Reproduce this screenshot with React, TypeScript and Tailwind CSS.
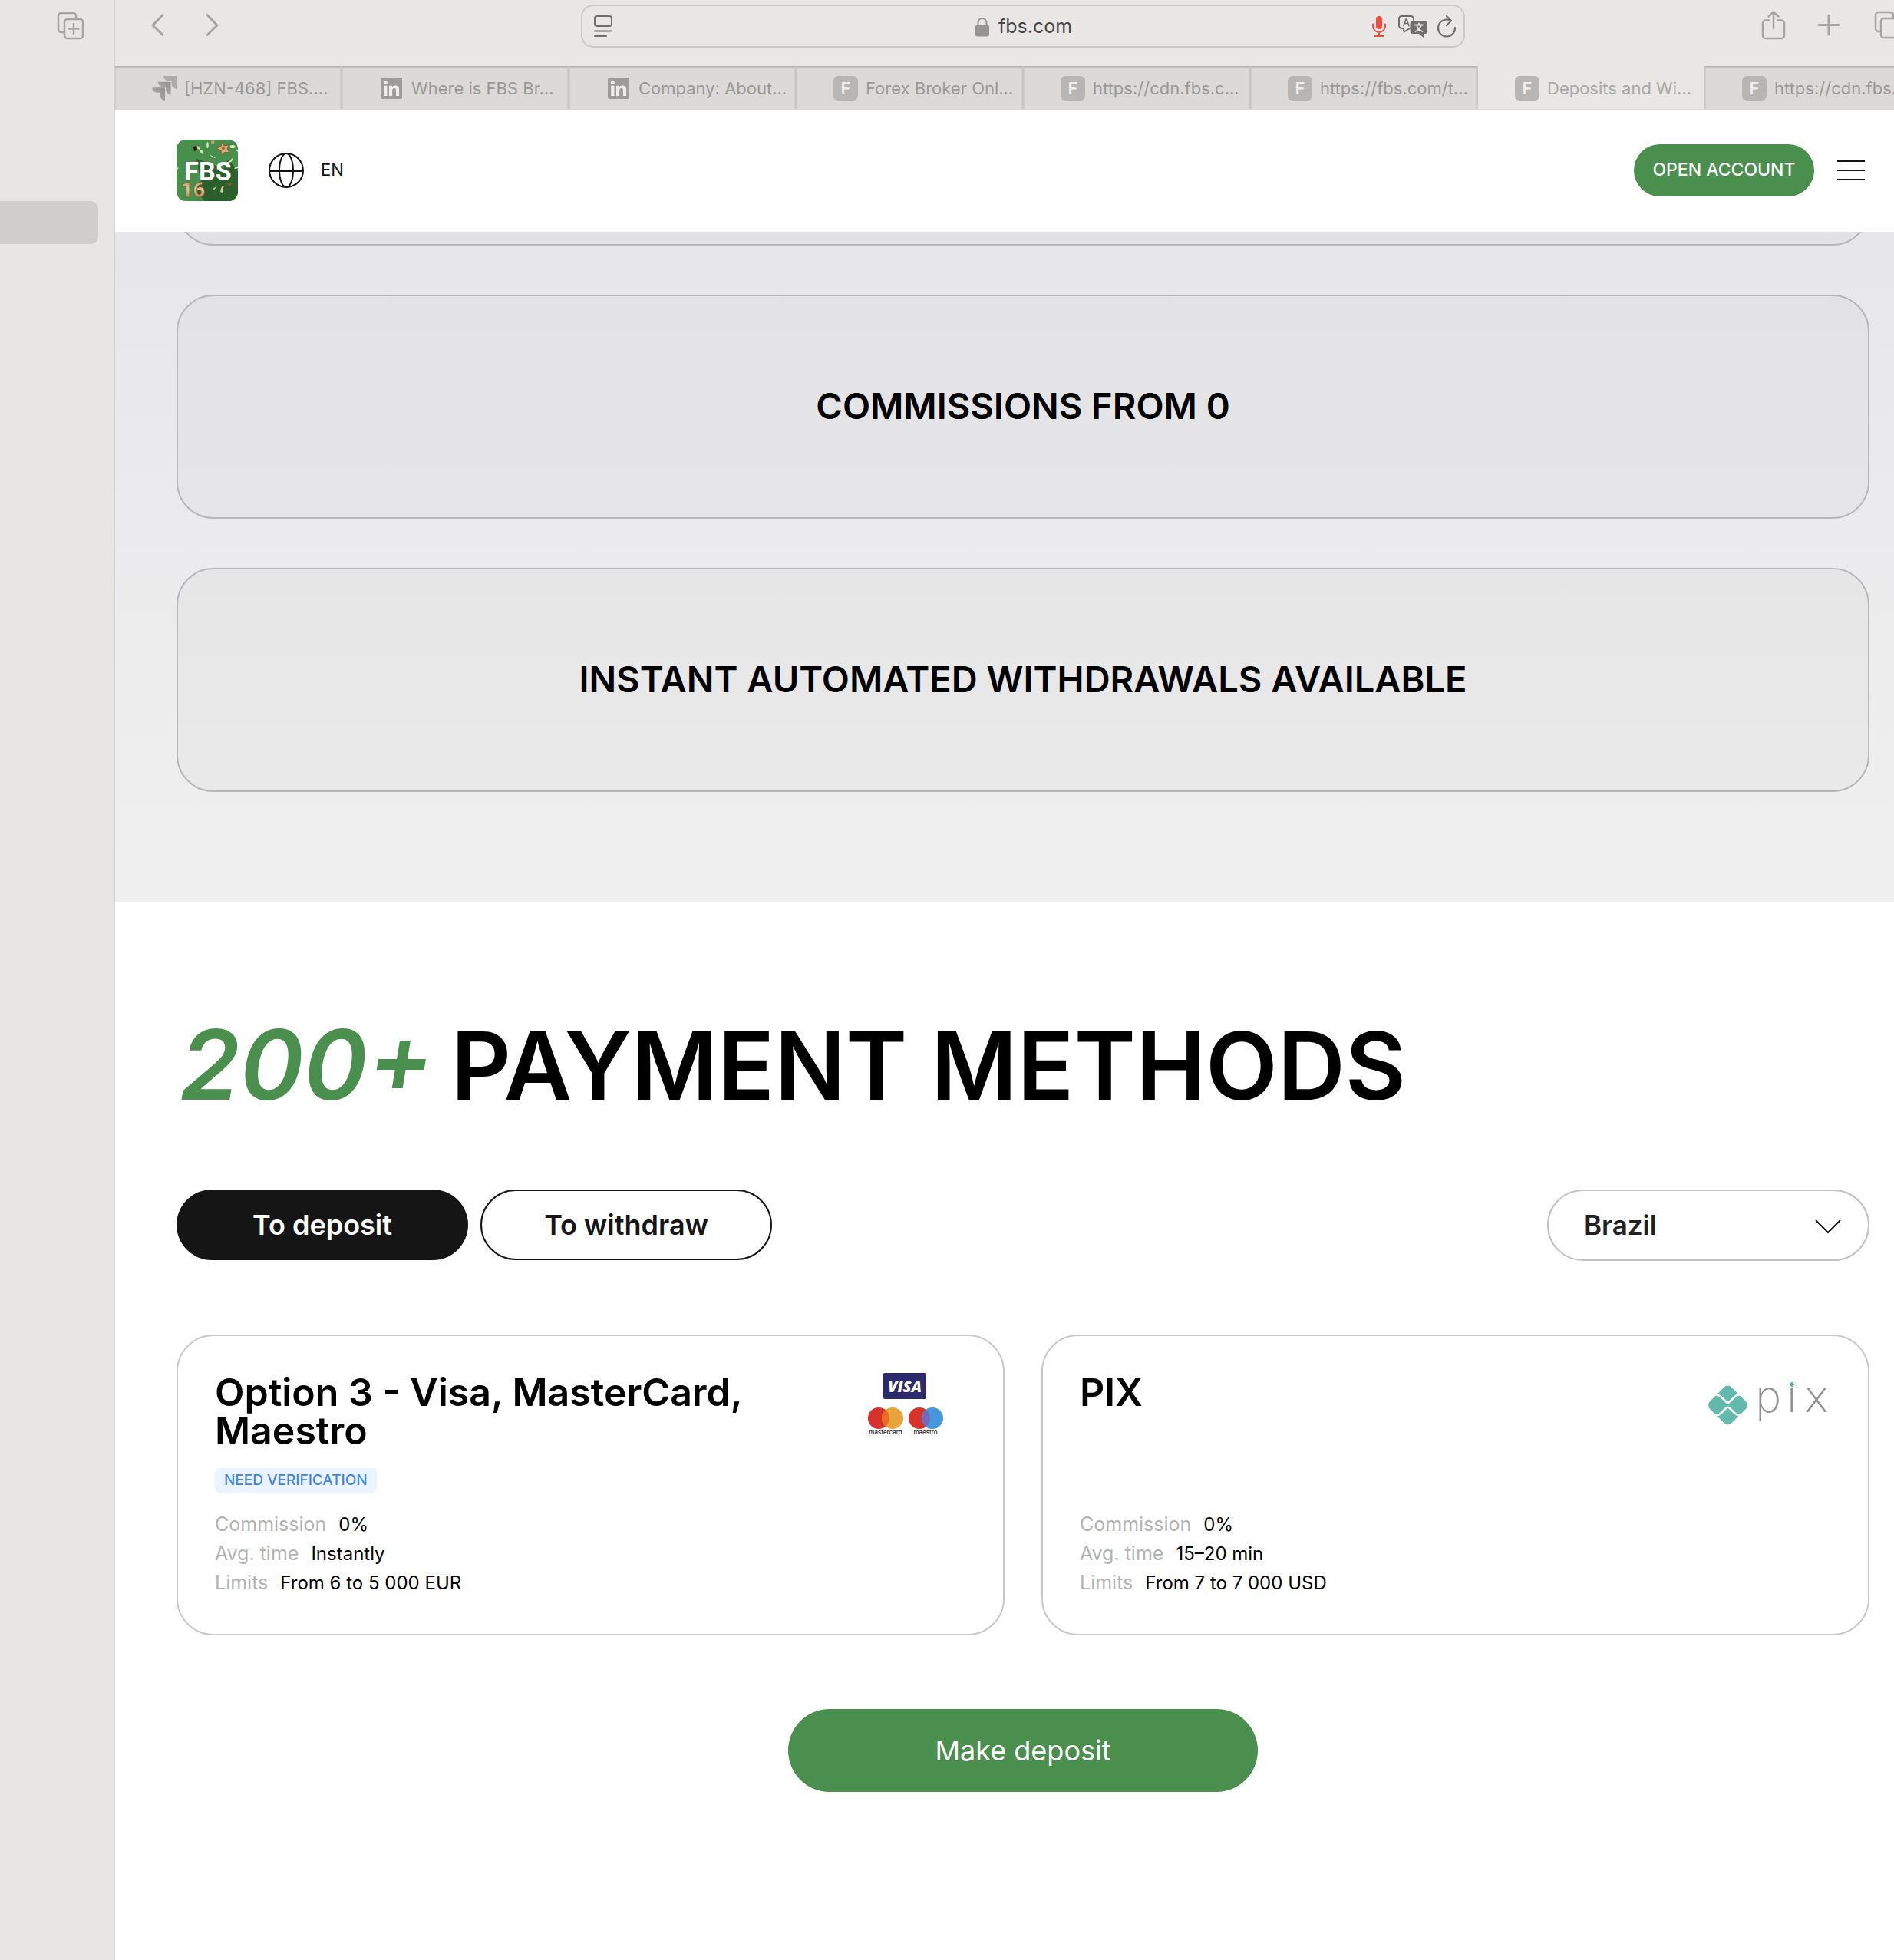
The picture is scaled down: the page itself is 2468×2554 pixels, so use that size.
import React from "react";

const tabs: { icon: "jira" | "linkedin" | "f"; label: string; active?: boolean }[] = [
  { icon: "jira", label: "[HZN-468] FBS...." },
  { icon: "linkedin", label: "Where is FBS Br..." },
  { icon: "linkedin", label: "Company: About..." },
  { icon: "f", label: "Forex Broker Onl..." },
  { icon: "f", label: "https://cdn.fbs.c..." },
  { icon: "f", label: "https://fbs.com/t..." },
  { icon: "f", label: "Deposits and Wi...", active: true },
  { icon: "f", label: "https://cdn.fbs.c..." },
];

function TabIcon({ kind }: { kind: "jira" | "linkedin" | "f" }) {
  if (kind === "jira") {
    return (
      <svg viewBox="0 0 32 32" className="size-8 shrink-0" aria-hidden="true">
        <defs>
          <linearGradient id="jiraFade" x1="1" y1="0" x2="0" y2="1">
            <stop offset="0.2" stopColor="#979695" />
            <stop offset="0.8" stopColor="#b0afae" />
          </linearGradient>
        </defs>
        <path fill="#adacab" d="M15 0h17v17a7 7 0 0 1-6.500-7V6.500H22A7 7 0 0 1 15 0Z" />
        <path fill="url(#jiraFade)" d="M7.500 7.700h17v17a7 7 0 0 1-6.500-7v-3.500h-3.500a7 7 0 0 1-7-6.500Z" />
        <path fill="url(#jiraFade)" d="M0 15.300h17v17a7 7 0 0 1-6.500-7v-3.500H7a7 7 0 0 1-7-6.500Z" />
      </svg>
    );
  }
  if (kind === "linkedin") {
    return (
      <svg viewBox="0 0 32 32" className="size-8 shrink-0" aria-hidden="true">
        <rect x="2" y="2" width="28" height="28" rx="2" fill="#9d9c9b" />
        <circle cx="8.300" cy="8.500" r="2.500" fill="#eeedec" />
        <path fill="#eeedec" d="M6.200 12.800h4.200V26H6.200zM13 12.800h4v1.900c.7-1.300 2.200-2.200 4.200-2.200 4 0 4.900 2.500 4.900 6V26H22v-6.700c0-1.700-.2-3.400-2.300-3.400s-2.600 1.700-2.600 3.400V26H13z" />
      </svg>
    );
  }
  return (
    <span className="flex size-8 shrink-0 items-center justify-center rounded-md bg-[#b7b6b5] text-[22px] font-semibold text-[#eeeeed]">
      F
    </span>
  );
}

const stroke = { fill: "none", strokeLinecap: "round", strokeLinejoin: "round" } as const;

function Toolbar() {
  return (
    <div className="flex h-[86px] items-start pl-[42px] text-[#a6a5a4]">
      <button aria-label="Back" className="mt-4 flex h-8 w-7 justify-center">
        <svg viewBox="0 0 28 32" className="h-8 w-7" stroke="currentColor" strokeWidth="3" {...stroke}>
          <path d="M20 3.500 7 17l13 12.500" />
        </svg>
      </button>
      <button aria-label="Forward" className="mt-4 ml-11 flex h-8 w-7 justify-center">
        <svg viewBox="0 0 28 32" className="h-8 w-7" stroke="currentColor" strokeWidth="3" {...stroke}>
          <path d="m6 3.500 13 13.500L6 29.500" />
        </svg>
      </button>
      <div className="flex flex-1 justify-center">
        <div className="mt-1.5 ml-20 flex h-14 w-[1152px] items-center rounded-2xl border-2 border-[#cbcac8] pr-2 pl-3 text-[#6f6e6d]">
          <button aria-label="Show reader" className="size-8">
            <svg viewBox="0 0 32 32" className="size-8" stroke="currentColor" strokeWidth="2" {...stroke}>
              <rect x="4" y="3" width="22" height="13" rx="3" />
              <path d="M4 22.500h22M4 29h15" />
            </svg>
          </button>
          <label className="flex flex-1 items-center justify-center gap-3 pt-0.5 pl-21">
            <svg viewBox="0 0 18 26" className="h-[26px] w-[18px]" aria-hidden="true">
              <path d="M3.500 12V7.500a5.500 5.500 0 0 1 11 0V12" fill="none" stroke="#969594" strokeWidth="2" />
              <rect x="0" y="10.500" width="18" height="15" rx="2.500" fill="#969594" />
            </svg>
            <input
              aria-label="Address"
              defaultValue="fbs.com"
              className="w-[100px] bg-transparent text-[25px] text-[#484746] outline-none"
            />
          </label>
          <div className="flex items-center gap-2.5">
            <button aria-label="Mute tab" className="mr-0.5 h-8 w-6">
              <svg viewBox="0 0 24 32" className="h-8 w-6" {...stroke} stroke="#ee4d3d" strokeWidth="2">
                <rect x="8" y="3" width="8" height="17" rx="4" fill="#ee4d3d" stroke="none" />
                <path d="M4 13.500v2.500a8 8 0 0 0 16 0v-2.500M12 24v5M6.500 29h11" />
              </svg>
            </button>
            <button aria-label="Translate" className="h-8 w-10">
              <svg viewBox="0 0 40 32" className="h-8 w-10" {...stroke} stroke="currentColor" strokeWidth="2">
                <path d="M17 18.500 8.500 23.500 8 19H5.500A3.500 3.500 0 0 1 2 15.500v-9A3.500 3.500 0 0 1 5.500 3h12A3.500 3.500 0 0 1 21 6.500V8" />
                <path d="m8 15.500 3.500-9.500 3.500 9.500M9.200 12.500h4.600" strokeWidth="1.700" />
                <path d="M20 9.500h15.500A3.500 3.500 0 0 1 39 13v9.500a3.500 3.500 0 0 1-3.500 3.500H34v5l-6-5h-8a3.500 3.500 0 0 1-3.500-3.500V13A3.500 3.500 0 0 1 20 9.500Z" fill="currentColor" stroke="none" />
                <path d="M23 14.500h10M28 12.500v2M31 14.500c-1 4-4 7-7.500 8.500M25 14.500c1 4 4 7 7.500 8.500" stroke="#e8e7e5" strokeWidth="1.800" />
              </svg>
            </button>
            <button aria-label="Reload" className="h-8 w-7">
              <svg viewBox="0 0 28 32" className="h-8 w-7" {...stroke} stroke="currentColor" strokeWidth="2.200">
                <path d="M25 18a11 11 0 1 1-11-10.500c2 0 3.500.3 5 1M14 3l6 6-6 6" />
              </svg>
            </button>
          </div>
        </div>
      </div>
      <div className="flex items-start gap-9 overflow-hidden">
        <button aria-label="Share" className="mt-3 h-10 w-9">
          <svg viewBox="0 0 36 40" className="h-10 w-9" {...stroke} stroke="currentColor" strokeWidth="2.500">
            <path d="M11 14.500H6.500A3.500 3.500 0 0 0 3 18v16.500A3.500 3.500 0 0 0 6.500 38h21a3.500 3.500 0 0 0 3.500-3.500V18a3.500 3.500 0 0 0-3.500-3.500H22M17 25V4M10.500 9.500 17 3.500l6.500 6" />
          </svg>
        </button>
        <button aria-label="New tab" className="mt-4 h-8 w-9">
          <svg viewBox="0 0 36 32" className="h-8 w-9" {...stroke} stroke="currentColor" strokeWidth="3">
            <path d="M17 4v25M4 16.500h26" />
          </svg>
        </button>
        <button aria-label="Tab overview" className="mt-3 -mr-2.5 h-10 w-10">
          <svg viewBox="0 0 40 40" className="size-10" {...stroke} stroke="currentColor" strokeWidth="2.500">
            <path d="M11 29H9.500A3.500 3.500 0 0 1 6 25.500v-18A3.500 3.500 0 0 1 9.500 4h16A3.500 3.500 0 0 1 29 7.500V12" />
            <rect x="13" y="12" width="24" height="25" rx="3.500" />
          </svg>
        </button>
      </div>
    </div>
  );
}

function FbsLogo() {
  return (
    <svg viewBox="0 0 80 80" className="size-20" role="img" aria-label="FBS">
      <defs>
        <clipPath id="logoClip">
          <rect width="80" height="80" rx="12" />
        </clipPath>
        <linearGradient id="gold" x1="0" y1="0" x2="0" y2="1">
          <stop offset="0" stopColor="#b5834f" />
          <stop offset="0.45" stopColor="#e6c59c" />
          <stop offset="1" stopColor="#a06d38" />
        </linearGradient>
      </defs>
      <g clipPath="url(#logoClip)">
        <rect width="80" height="80" fill="#488e4c" />
        <path d="M26 25 80 44v36H37L24 66 32 56Z" fill="#2b5f2c" />
        <path d="M67 26 80 40v10L60 40Z" fill="#2b5f2c" />
        <text x="41" y="53" textAnchor="middle" fontFamily="Roboto, sans-serif" fontWeight="700" fontSize="34" fill="#fff">
          FBS
        </text>
        <text x="6" y="75" fontFamily="Roboto, sans-serif" fontWeight="800" fontSize="27" fill="url(#gold)" stroke="#7a4c22" strokeWidth="0.5">
          16
        </text>
        <path d="m59 3 3 5 6-1-2 5 3 5-6-1-4 4-1-6-6-3 6-2Z" fill="#d9b07c" stroke="#8f5e2e" strokeWidth="1" />
        <circle cx="61" cy="11" r="2" fill="#a8622a" />
        <path d="m22 9 4-1 1 5-4 2Z" fill="#16150f" />
        <path d="m27 8 3 1v4l-3-1Z" fill="#d8c7a0" />
        <rect x="45" y="0" width="4.500" height="6" rx="2" fill="#b39a70" />
        <ellipse cx="40.500" cy="7" rx="1.200" ry="4" fill="#dcecc4" />
        <ellipse cx="73" cy="9" rx="3.500" ry="2" fill="#dcecc4" />
        <ellipse cx="33" cy="16" rx="1.600" ry="3" fill="#d6dfb2" transform="rotate(-35 33 16)" />
        <path d="m44 20 7 3-1 1-6-3ZM76 13l4 1v2ZM47 64l6-3-4 4Z" fill="#cfe3c4" />
        <path d="M65 29c4 0 5-2 8-5 0 4-2 6-7 6ZM75 37l5-2v2l-4 1ZM0 36l3 1-3 2Z" fill="#dcecc4" />
        <path d="M57 68c1-4 1-5 3-8l2 1c-3 4-1 5-2 8Z" fill="#d6c797" />
        <path d="m63 56 11 1-5 4Z" fill="#7e5a33" />
      </g>
    </svg>
  );
}

function SiteHeader() {
  return (
    <header className="flex h-[159px] items-center justify-between bg-white pr-8 pb-0.5 pl-20">
      <div className="flex items-center gap-10">
        <a href="#home">
          <FbsLogo />
        </a>
        <button className="flex items-center gap-[22px] text-[22px] text-[#151515]">
          <svg viewBox="0 0 46 46" className="size-[46px]" fill="none" stroke="#151515" strokeWidth="2" aria-hidden="true">
            <circle cx="23" cy="23" r="22" />
            <ellipse cx="23" cy="23" rx="9" ry="22" />
            <path d="M1 24h44" />
          </svg>
          EN
        </button>
      </div>
      <div className="flex items-center gap-6">
        <a href="#open" className="flex h-[68px] w-[235px] items-center justify-center rounded-full bg-[#4a8f4d] text-[23px] font-medium text-white">
          OPEN ACCOUNT
        </a>
        <button aria-label="Menu" className="size-12">
          <svg viewBox="0 0 48 48" className="size-12" stroke="#151515" strokeWidth="2">
            <path d="M6 12h36M6 24h36M6 36h36" />
          </svg>
        </button>
      </div>
    </header>
  );
}

function Feature({ children }: { children?: React.ReactNode }) {
  return (
    <div className="flex h-[292px] w-full shrink-0 items-center justify-center rounded-[48px] border-2 border-[#b6b7b9] bg-black/2 pb-0.5 text-center text-[47px] font-semibold text-black">
      {children}
    </div>
  );
}

function CardLogos() {
  return (
    <svg viewBox="0 0 160 80" className="h-20 w-40 shrink-0 overflow-visible" role="img" aria-label="Visa, mastercard, maestro">
      <rect x="52" y="0" width="56" height="34" rx="2" fill="#2b2a6c" />
      <text x="80" y="24.500" textAnchor="middle" fontFamily="Open Sans, sans-serif" fontWeight="800" fontStyle="italic" fontSize="20" fill="#fff">
        VISA
      </text>
      <circle cx="46" cy="59" r="14" fill="#d8332a" />
      <circle cx="64" cy="59" r="14" fill="#e9a33b" />
      <path d="M55 48.300a14 14 0 0 1 0 21.400 14 14 0 0 1 0-21.400Z" fill="#ec6a25" />
      <circle cx="99" cy="59" r="14" fill="#d8332a" />
      <circle cx="116" cy="59" r="14" fill="#4797dc" />
      <path d="M107.500 47.900a14 14 0 0 1 0 22.200 14 14 0 0 1 0-22.200Z" fill="#746bb8" />
      <text x="55" y="79.500" textAnchor="middle" fontFamily="Inter, sans-serif" fontWeight="500" fontSize="8" fill="#222">
        mastercard
      </text>
      <text x="107" y="79.500" textAnchor="middle" fontFamily="Inter, sans-serif" fontWeight="500" fontSize="8" fill="#222">
        maestro
      </text>
    </svg>
  );
}

function PixLogo() {
  return (
    <svg viewBox="0 0 160 80" className="h-20 w-40 shrink-0 overflow-visible" role="img" aria-label="pix">
      <rect x="5.500" y="22" width="40" height="40" rx="7" fill="#63b9ac" transform="rotate(45 25.500 42)" />
      <path
        d="M4 28.500h7c3 0 4 1 6 3l6 6c1.500 1.500 3.500 1.500 5 0l6-6c2-2 3-3 6-3h8M4 55h7c3 0 4-1 6-3l6-6c1.500-1.500 3.500-1.500 5 0l6 6c2 2 3 3 6 3h8"
        fill="none"
        stroke="#fff"
        strokeWidth="2.500"
      />
      <text y="51" fontFamily="'DejaVu Sans', Inter, sans-serif" fontWeight="200" fontSize="57" fill="#8f8f95">
        <tspan x="60">p</tspan>
        <tspan x="101">i</tspan>
        <tspan x="124">x</tspan>
      </text>
      <rect x="102" y="2" width="14" height="12" fill="#fff" />
      <path d="m109 11.500 3.500 3.500-3.500 3.500-3.500-3.500Z" fill="#4fb3a3" />
    </svg>
  );
}

function Method({ title, badge, rows, logo }: { title: string; badge?: string; rows: [string, string][]; logo: React.ReactNode }) {
  return (
    <article className="flex min-h-[392px] flex-1 flex-col rounded-[48px] border-2 border-[#c8c8c8] p-12">
      <div className="flex items-start justify-between gap-12">
        <div>
          <h3 className="max-w-[740px] text-[50px] leading-[50px] font-semibold">{title}</h3>
          {badge && (
            <span className="mt-6 flex h-8 w-fit items-center rounded-md bg-[#ebf4ff] px-3 text-[19px] font-medium text-[#3f86e6]">{badge}</span>
          )}
        </div>
        {logo}
      </div>
      <dl className="mt-auto text-2xl leading-[38px]">
        {rows.map(([k, v]) => (
          <div key={k} className="flex h-[38px] items-baseline gap-4">
            <dt className="text-[25px] leading-[38px] text-[#b3b3b3]">{k}</dt>
            <dd>{v}</dd>
          </div>
        ))}
      </dl>
    </article>
  );
}

export default function App() {
  return (
    <div className="flex min-h-screen overflow-hidden bg-white font-['Inter',sans-serif] text-black">
      <aside className="w-[150px] shrink-0 border-r border-[#d3d1cf] bg-[#e8e6e4]">
        <div className="flex h-[262px] items-start justify-end pt-3.5 pr-9 text-[#a6a5a4]">
          <button aria-label="New tab group" className="size-10">
            <svg viewBox="0 0 40 40" className="size-10" {...stroke} stroke="currentColor" strokeWidth="2.500">
              <path d="M9 28H6.500A3.500 3.500 0 0 1 3 24.500v-18A3.500 3.500 0 0 1 6.500 3h16A3.500 3.500 0 0 1 26 6.500V10" />
              <rect x="11" y="11" width="24" height="25" rx="3.500" />
              <path d="M23 17v13M16.500 23.500h13" />
            </svg>
          </button>
        </div>
        <div className="mr-[21px] h-14 rounded-r-[10px] bg-[#cfcecc]" />
      </aside>

      <div className="min-w-0 flex-1">
        <div className="bg-[#e8e7e5]">
          <Toolbar />
          <nav className="flex h-[57px] overflow-hidden border-b border-[#dddcda]">
            {tabs.map((t, i) => (
              <a
                key={i}
                href="#tab"
                className={
                  t.active
                    ? "flex w-[296px] shrink-0 items-center gap-2.5 border-r-2 border-[#c6c5c4] pt-0.5 pl-12 text-[22px] whitespace-nowrap text-[#a9a8a7]"
                    : "flex w-[296px] shrink-0 items-center gap-2.5 border-r-2 border-[#c6c5c4] bg-[#dbdad8] pt-0.5 pl-12 text-[22px] whitespace-nowrap text-[#9a9998] shadow-[inset_0_2px_2px_#b5b4b3]"
                }
              >
                <TabIcon kind={t.icon} />
                {t.label}
              </a>
            ))}
          </nav>
        </div>

        <SiteHeader />

        <section className="flex flex-col gap-16 bg-linear-to-b from-[#e7e7ea] to-[#f0f0f0] pr-8 pb-36 pl-20">
          <div className="flex h-[18px] items-end overflow-hidden">
            <Feature />
          </div>
          <Feature>COMMISSIONS FROM 0</Feature>
          <Feature>INSTANT AUTOMATED WITHDRAWALS AVAILABLE</Feature>
        </section>

        <section className="flex flex-col gap-24 pt-36 pr-8 pl-20">
          <h2 className="flex h-[134px] items-baseline gap-6 text-[122px] leading-[134px] font-semibold">
            <em className="pl-1 text-[126px] leading-[134px] text-[#4a8f4d]">200+</em>
            <span>PAYMENT METHODS</span>
          </h2>
          <div className="flex items-start justify-between">
            <div className="flex gap-4 text-4xl font-semibold">
              <button className="h-[92px] w-[380px] rounded-full bg-[#151515] text-white">To deposit</button>
              <button className="h-[92px] w-[380px] rounded-full border-2 border-[#151515] text-[#151515]">To withdraw</button>
            </div>
            <div className="relative">
              <select
                aria-label="Country"
                className="block h-[93px] w-[420px] appearance-none rounded-full border-2 border-[#c1c1c1] bg-white px-[46px] text-[35px] font-semibold text-[#212121]"
              >
                <option>Brazil</option>
              </select>
              <svg viewBox="0 0 36 20" className="pointer-events-none absolute top-[38px] right-9 h-5 w-9" fill="none" stroke="#151515" strokeWidth="2">
                <path d="m2 2 16 16L34 2" />
              </svg>
            </div>
          </div>
          <div className="flex gap-12">
            <Method
              title="Option 3 - Visa, MasterCard, Maestro"
              badge="NEED VERIFICATION"
              rows={[
                ["Commission", "0%"],
                ["Avg. time", "Instantly"],
                ["Limits", "From 6 to 5 000 EUR"],
              ]}
              logo={<CardLogos />}
            />
            <Method
              title="PIX"
              rows={[
                ["Commission", "0%"],
                ["Avg. time", "15–20 min"],
                ["Limits", "From 7 to 7 000 USD"],
              ]}
              logo={<PixLogo />}
            />
          </div>
          <button className="h-[108px] w-[612px] self-center rounded-full bg-[#4a8f4d] text-4xl text-white">Make deposit</button>
        </section>
      </div>
    </div>
  );
}
